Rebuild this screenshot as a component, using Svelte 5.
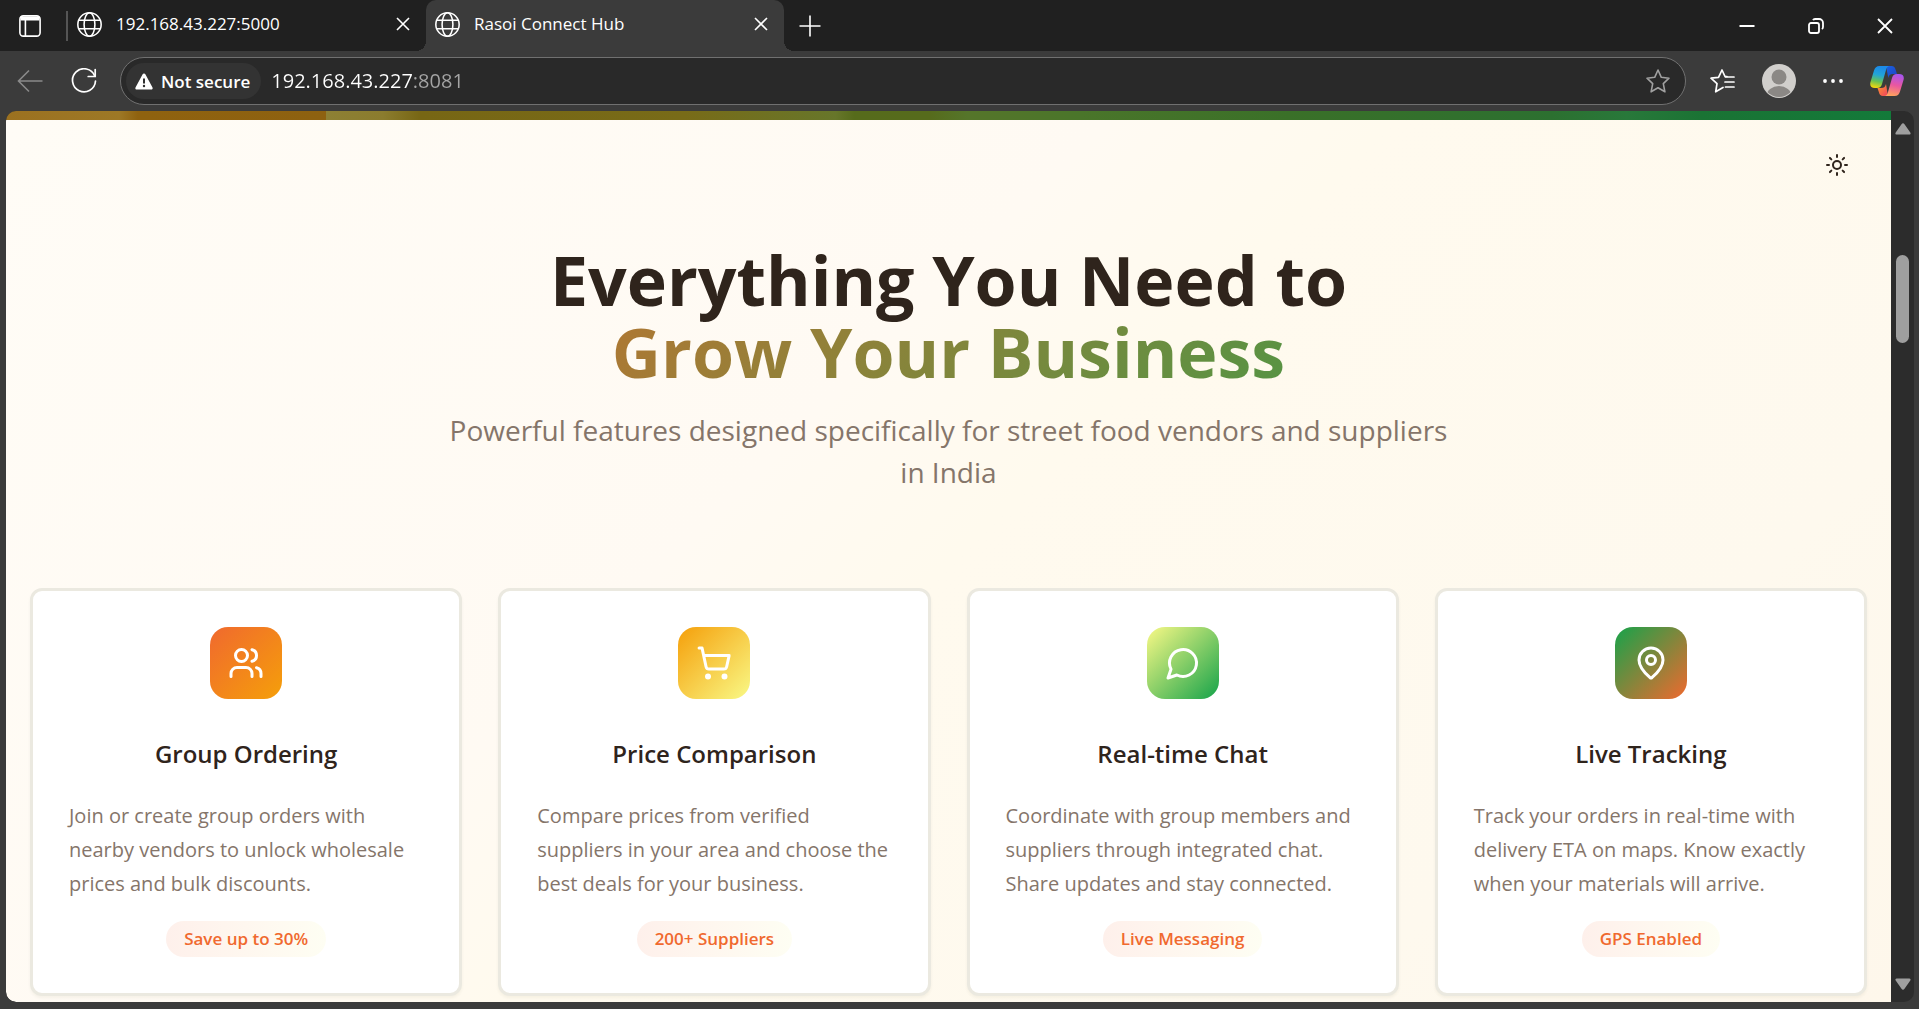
<script>
  let url = $state('192.168.43.227:8081');

  const cards = [
    {
      icon: 'users',
      title: 'Group Ordering',
      text: 'Join or create group orders with nearby vendors to unlock wholesale prices and bulk discounts.',
      tag: 'Save up to 30%'
    },
    {
      icon: 'cart',
      title: 'Price Comparison',
      text: 'Compare prices from verified suppliers in your area and choose the best deals for your business.',
      tag: '200+ Suppliers'
    },
    {
      icon: 'chat',
      title: 'Real-time Chat',
      text: 'Coordinate with group members and suppliers through integrated chat. Share updates and stay connected.',
      tag: 'Live Messaging'
    },
    {
      icon: 'pin',
      title: 'Live Tracking',
      text: 'Track your orders in real-time with delivery ETA on maps. Know exactly when your materials will arrive.',
      tag: 'GPS Enabled'
    }
  ];
</script>

{#snippet globe()}
  <svg class="globe" viewBox="0 0 24 24" aria-hidden="true">
    <circle cx="12" cy="12" r="11.2" />
    <ellipse cx="12" cy="12" rx="5.2" ry="11.2" />
    <path d="M1.8 8h20.4M1.8 16h20.4" />
  </svg>
{/snippet}

{#snippet cross()}
  <svg class="cross" viewBox="0 0 14 14" aria-hidden="true"><path d="M1 1l12 12M13 1L1 13" /></svg>
{/snippet}

<div class="browser">
  <header>
    <div class="strip">
      <button class="bare tab-actions" aria-label="Tab actions">
        <svg width="22" height="22" viewBox="0 0 22 22" fill="none" stroke="#fff" stroke-width="1.6">
          <rect x="0.9" y="0.9" width="20.2" height="20.2" rx="3.4" />
          <path d="M1.500 3.500h19" stroke-width="4" />
          <path d="M6.4 5v16" />
        </svg>
      </button>
      <span class="rule"></span>
      <div class="tab">
        {@render globe()}
        <button class="bare label">192.168.43.227:5000</button>
        <button class="bare close" aria-label="Close tab">{@render cross()}</button>
      </div>
      <div class="tab active">
        {@render globe()}
        <button class="bare label">Rasoi Connect Hub</button>
        <button class="bare close" aria-label="Close tab">{@render cross()}</button>
      </div>
      <button class="bare plus" aria-label="New tab">
        <svg width="22" height="22" viewBox="0 0 22 22" stroke="#fff" stroke-width="1.6"><path d="M11 0.5v21M0.5 11h21" /></svg>
      </button>
      <div class="window">
        <button class="bare" aria-label="Minimize">
          <svg width="16" height="16" viewBox="0 0 16 16" stroke="#fff" stroke-width="2"><path d="M0.5 8h15" /></svg>
        </button>
        <button class="bare" aria-label="Restore">
          <svg width="16" height="16" viewBox="0 0 16 16" fill="none" stroke="#fff" stroke-width="1.8">
            <rect x="1" y="5" width="10" height="10" rx="2" />
            <path d="M5 2.2C5.4 1.4 6 1 7 1h4a4 4 0 0 1 4 4v4c0 1-.4 1.700-1.200 2" />
          </svg>
        </button>
        <button class="bare" aria-label="Close">
          <svg width="16" height="16" viewBox="0 0 16 16" stroke="#fff" stroke-width="1.8"><path d="M1 1l14 14M15 1L1 15" /></svg>
        </button>
      </div>
    </div>

    <div class="toolbar">
      <button class="bare back" aria-label="Back">
        <svg width="26" height="24" viewBox="0 0 26 24" fill="none" stroke="#8a8a8a" stroke-width="1.6"><path d="M25.500 12H1.500M12 1.500L1.500 12 12 22.500" /></svg>
      </button>
      <button class="bare reload" aria-label="Refresh">
        <svg width="26" height="26" viewBox="0 0 26 26" fill="none" stroke="#fff" stroke-width="1.7" stroke-linecap="round">
          <path d="M23.700 8A11.500 11.500 0 1 0 24.500 13" />
          <path d="M24.200 1.500v7h-7" />
        </svg>
      </button>
      <div class="address">
        <button class="bare secure">
          <svg width="18" height="17" viewBox="0 0 18 17" aria-hidden="true">
            <path d="M9 0.500c.7 0 1.200.3 1.500.9l7 13c.5 1-.1 2.100-1.300 2.100H1.800C.6 16.500 0 15.400.5 14.400l7-13C7.800.8 8.300.5 9 .5z" fill="#fff" />
            <path d="M9 5.500v5" stroke="#303030" stroke-width="2" />
            <circle cx="9" cy="13" r="1.200" fill="#303030" />
          </svg>
          Not secure
        </button>
        <input aria-label="Address" bind:value={url} />
        <button class="bare" aria-label="Add to favorites">
          <svg width="24" height="24" viewBox="0 0 24 24" fill="none" stroke="#a0a0a0" stroke-width="1.600" stroke-linejoin="round">
            <path d="M12 1l3.300 7.300 7.700.9-5.700 5.400 1.600 8.200L12 18.800l-6.900 4 1.600-8.200L1 9.200l7.700-.9z" />
          </svg>
        </button>
      </div>
      <div class="tools">
        <button class="bare" aria-label="Favorites">
          <svg width="25" height="24" viewBox="0 0 25 24" fill="none" stroke="#fff" stroke-width="1.700" stroke-linejoin="round" stroke-linecap="round">
            <path d="M13 18.500l-7.300 4.300L7 14.700 1 9.200l7.500-.9L12 1l3 6.500h2" />
            <path d="M15.500 8H24M15 13h9M15.500 18H24" />
          </svg>
        </button>
        <button class="bare" aria-label="Profile">
          <svg width="34" height="34" viewBox="0 0 34 34">
            <defs><clipPath id="face"><circle cx="17" cy="17" r="16" /></clipPath></defs>
            <circle cx="17" cy="17" r="17" fill="#d1cfcc" />
            <circle cx="17" cy="13" r="7.500" fill="#8b8885" />
            <ellipse cx="17" cy="32" rx="12.500" ry="10" fill="#8b8885" clip-path="url(#face)" />
          </svg>
        </button>
        <button class="bare" aria-label="Settings and more">
          <svg width="20" height="4" viewBox="0 0 20 4" fill="#fff"><circle cx="2" cy="2" r="1.900" /><circle cx="10" cy="2" r="1.900" /><circle cx="18" cy="2" r="1.900" /></svg>
        </button>
        <button class="bare" aria-label="Copilot">
          <svg width="34" height="32" viewBox="0 0 34 32">
            <defs>
              <linearGradient id="c1" x1="0.500" y1="0" x2="0.300" y2="1">
                <stop offset="0.050" stop-color="#1c8be8" /><stop offset="0.400" stop-color="#22a5d8" /><stop offset="0.700" stop-color="#68c256" /><stop offset="1" stop-color="#f5d80c" />
              </linearGradient>
              <linearGradient id="c2" x1="0.600" y1="0" x2="0.400" y2="1">
                <stop offset="0" stop-color="#a855ee" /><stop offset="0.500" stop-color="#ea57a0" /><stop offset="1" stop-color="#ffa35c" />
              </linearGradient>
              <linearGradient id="c3" x1="0" y1="0" x2="1" y2="1">
                <stop offset="0" stop-color="#1a62e0" /><stop offset="1" stop-color="#1d42c4" />
              </linearGradient>
              <linearGradient id="c4" x1="0" y1="0" x2="1" y2="1">
                <stop offset="0" stop-color="#ff9a2a" /><stop offset="1" stop-color="#ef4060" />
              </linearGradient>
            </defs>
            <path d="M16 1h5.500c2.500 0 3.500 1.500 4.200 4l1.300 4h-4c-3 0-4 1-4.700 4z" fill="url(#c3)" />
            <path d="M18 31h-5c-2.500 0-3.500-1.500-4-3.500L7.500 23H11c3 0 4-1 5-4z" fill="url(#c4)" />
            <path d="M9.500 1H20c-2.300 0-3.300 1.500-4 4l-4 14c-.8 2.700-2 4-5 4H5c-4 0-5.500-2.500-4.500-6L4 5.500C5 2.500 6.500 1 9.500 1z" fill="url(#c1)" />
            <path d="M24.500 31H14c2.300 0 3.300-1.500 4-4l4-14c.8-2.700 2-4 5-4h2c4 0 5.500 2.500 4.500 6L30 26.500c-1 3-2.500 4.500-5.500 4.500z" fill="url(#c2)" />
          </svg>
        </button>
      </div>
    </div>
  </header>

  <div class="frame">
    <main>
      <div class="banner"></div>
      <section>
        <button class="bare theme" aria-label="Toggle theme">
          <svg width="22" height="22" viewBox="1 1 22 22" fill="none" stroke="#2f241c" stroke-width="2" stroke-linecap="round">
            <circle cx="12" cy="12" r="4" />
            <path d="M12 2v2M12 20v2M4.930 4.930l1.410 1.410M17.660 17.660l1.410 1.410M2 12h2M20 12h2M6.340 17.660l-1.410 1.410M19.070 4.930l-1.410 1.410" />
          </svg>
        </button>
        <div class="hero">
          <h1>Everything You Need to<br /><span>Grow Your Business</span></h1>
          <p>Powerful features designed specifically for street food vendors and suppliers in India</p>
        </div>
        <div class="cards">
          {#each cards as card}
            <article>
              <div class="badge {card.icon}">
                <svg width="36" height="36" viewBox="0 0 24 24" fill="none" stroke="#fff" stroke-width="2" stroke-linecap="round" stroke-linejoin="round" aria-hidden="true">
                  {#if card.icon === 'users'}
                    <path d="M16 21v-2a4 4 0 0 0-4-4H6a4 4 0 0 0-4 4v2" />
                    <circle cx="9" cy="7" r="4" />
                    <path d="M22 21v-2a4 4 0 0 0-3-3.870M16 3.130a4 4 0 0 1 0 7.750" />
                  {:else if card.icon === 'cart'}
                    <circle cx="8" cy="21" r="1" />
                    <circle cx="19" cy="21" r="1" />
                    <path d="M2.050 2.050h2l2.660 12.420a2 2 0 0 0 2 1.580h9.780a2 2 0 0 0 1.950-1.570l1.650-7.430H5.120" />
                  {:else if card.icon === 'chat'}
                    <path d="M7.900 20A9 9 0 1 0 4 16.100L2 22Z" />
                  {:else}
                    <path d="M20 10c0 4.993-5.539 10.193-7.399 11.799a1 1 0 0 1-1.202 0C9.539 20.193 4 14.993 4 10a8 8 0 0 1 16 0" />
                    <circle cx="12" cy="10" r="3" />
                  {/if}
                </svg>
              </div>
              <h3>{card.title}</h3>
              <p>{card.text}</p>
              <span class="tag">{card.tag}</span>
            </article>
          {/each}
        </div>
      </section>
    </main>
    <div class="scroll">
      <svg width="16" height="12" viewBox="0 0 16 12" fill="#9f9f9f"><path d="M6.500 1.200c.8-1.200 2.200-1.200 3 0l5.800 8.300c.7 1 .2 2.100-1 2.100H1.700c-1.200 0-1.700-1.100-1-2.100z" /></svg>
      <div class="thumb"></div>
      <svg width="16" height="12" viewBox="0 0 16 12" fill="#9f9f9f"><path d="M6.500 10.800c.8 1.200 2.200 1.200 3 0l5.800-8.300c.7-1 .2-2.100-1-2.100H1.700C.5.4 0 1.500.7 2.500z" /></svg>
    </div>
  </div>
</div>

<style>
  :global(body) {
    margin: 0;
    background: #3b3b3b;
    font-family: 'Open Sans', 'Noto Sans', sans-serif;
  }
  .browser {
    display: flex;
    flex-direction: column;
    min-height: 100vh;
    background: #3b3b3b;
    color: #fff;
  }
  svg {
    display: block;
    flex: none;
  }
  .bare {
    border: 0;
    margin: 0;
    padding: 0;
    background: none;
    color: inherit;
    font: inherit;
    display: flex;
    align-items: center;
    justify-content: center;
  }

  .strip {
    display: flex;
    align-items: center;
    height: 51px;
    background: #202020;
  }
  .tab-actions {
    width: 60px;
    height: 48px;
  }
  .rule {
    width: 2px;
    height: 30px;
    margin-left: 6px;
    background: #555;
  }
  .tab {
    position: relative;
    display: flex;
    align-items: center;
    box-sizing: border-box;
    width: 358px;
    height: 51px;
    padding: 0 16px 3px 9px;
  }
  .tab.active {
    background: #3b3b3b;
    border-radius: 10px 10px 0 0;
  }
  .tab.active::before,
  .tab.active::after {
    content: '';
    position: absolute;
    bottom: 0;
    width: 10px;
    height: 10px;
  }
  .tab.active::before {
    right: 100%;
    background: radial-gradient(circle at 0 0, transparent 10px, #3b3b3b 10px);
  }
  .tab.active::after {
    left: 100%;
    background: radial-gradient(circle at 100% 0, transparent 10px, #3b3b3b 10px);
  }
  .globe {
    width: 25px;
    height: 25px;
    fill: none;
    stroke: #fff;
    stroke-width: 1.500;
  }
  .label {
    flex: 1;
    justify-content: flex-start;
    margin-left: 14px;
    font-size: 17px;
    line-height: 24px;
  }
  .cross {
    width: 14px;
    height: 14px;
    stroke: #fff;
    stroke-width: 1.600;
  }
  .plus {
    width: 52px;
    height: 46px;
  }
  .window {
    display: flex;
    margin-left: auto;
  }
  .window button {
    width: 69px;
    height: 50px;
  }

  .toolbar {
    display: flex;
    align-items: center;
    height: 60px;
  }
  .back {
    width: 60px;
  }
  .reload {
    width: 48px;
    margin-right: 12px;
  }
  .address {
    flex: 1;
    display: flex;
    align-items: center;
    box-sizing: border-box;
    height: 48px;
    padding: 0 15px 0 5px;
    border: 1px solid #707070;
    border-radius: 24px;
    background: #292929;
  }
  .secure {
    gap: 8px;
    height: 36px;
    padding: 0 11px 0 9px;
    border-radius: 18px;
    background: #333;
    font-size: 17px;
    font-weight: 600;
  }
  input {
    flex: 1;
    min-width: 0;
    margin-left: 10px;
    padding: 0;
    border: 0;
    outline: 0;
    font: 20px/30px 'Open Sans', 'Noto Sans', sans-serif;
    color: transparent;
    background: linear-gradient(90deg, #fff 142px, #a5a5a5 142px);
    background-clip: text;
    -webkit-background-clip: text;
  }
  .tools {
    display: flex;
    align-items: center;
    padding: 0 15px 0 24px;
    gap: 27px;
  }

  .frame {
    flex: 1;
    display: flex;
    margin: 0 5px 7px 6px;
    border-radius: 10px;
    overflow: hidden;
    background: #2c2c2c;
  }
  main {
    flex: 1;
    display: flex;
    flex-direction: column;
    border-bottom-left-radius: 10px;
    overflow: hidden;
  }
  .banner {
    height: 9px;
    background: linear-gradient(
      90deg,
      #9b7120 0%, #9d7826 6%, #8f620f 7%, #8d6110 17%, #8d8034 17%, #8b7c2e 20%,
      #776614 22%, #786b18 36%, #67762a 44%, #566b1b 45%, #566b1c 49%, #55752a 51%,
      #4a752a 57%, #3a7028 68%, #2c7030 82%, #28783a 86%, #1a7334 90%, #137a3a 100%
    );
  }
  section {
    flex: 1;
    display: flex;
    flex-direction: column;
    padding: 34px 24px 6px;
    background: linear-gradient(135deg, #fffcf6 0%, #fffaf3 40%, #fffaee 50%, #fef9ee 80%, #fef7eb 100%);
    color: #2f241c;
  }
  .theme {
    align-self: flex-end;
    margin-right: 19px;
  }
  .hero {
    margin: 68px auto 95px;
    max-width: 1020px;
    text-align: center;
  }
  h1 {
    margin: 0 0 21px;
    font-size: 68px;
    line-height: 72px;
    font-weight: 700;
  }
  h1 span {
    background: linear-gradient(135deg, #b07733, #559444);
    background-clip: text;
    -webkit-background-clip: text;
    color: transparent;
  }
  .hero p {
    margin: 0;
    font-size: 28px;
    line-height: 42px;
    color: #85756a;
  }
  .cards {
    display: grid;
    grid-template-columns: repeat(4, 1fr);
    gap: 36px;
  }
  article {
    display: flex;
    flex-direction: column;
    align-items: center;
    padding: 36px;
    border: 3px solid #ebe9e0;
    border-radius: 12px;
    background: #fff;
    box-shadow: 0 2px 3px rgba(90, 80, 50, 0.060);
  }
  .badge {
    display: grid;
    place-items: center;
    width: 72px;
    height: 72px;
    border-radius: 18px;
  }
  .users {
    background: linear-gradient(135deg, #f0692e, #f59f0a);
  }
  .cart {
    background: linear-gradient(135deg, #f59f0a, #f9f986);
  }
  .chat {
    background: linear-gradient(135deg, #f9f986, #16a34a);
  }
  .pin {
    background: linear-gradient(135deg, #16a34a, #f0692e);
  }
  h3 {
    margin: 37px 0 27px;
    font-size: 24px;
    line-height: 36px;
    font-weight: 600;
  }
  article p {
    margin: 0 0 20px;
    width: 100%;
    font-size: 20px;
    line-height: 34px;
    color: #85756a;
  }
  .tag {
    padding: 0 18px;
    border-radius: 18px;
    background: linear-gradient(90deg, #fef0eb, #fefef3);
    color: #f0692e;
    font-size: 17px;
    line-height: 36px;
    font-weight: 600;
  }

  .scroll {
    display: flex;
    flex-direction: column;
    align-items: center;
    box-sizing: border-box;
    width: 23px;
    padding: 12px 0;
  }
  .thumb {
    width: 13px;
    height: 88px;
    margin: 120px 0 auto;
    border-radius: 7px;
    background: #9f9f9f;
  }
</style>
